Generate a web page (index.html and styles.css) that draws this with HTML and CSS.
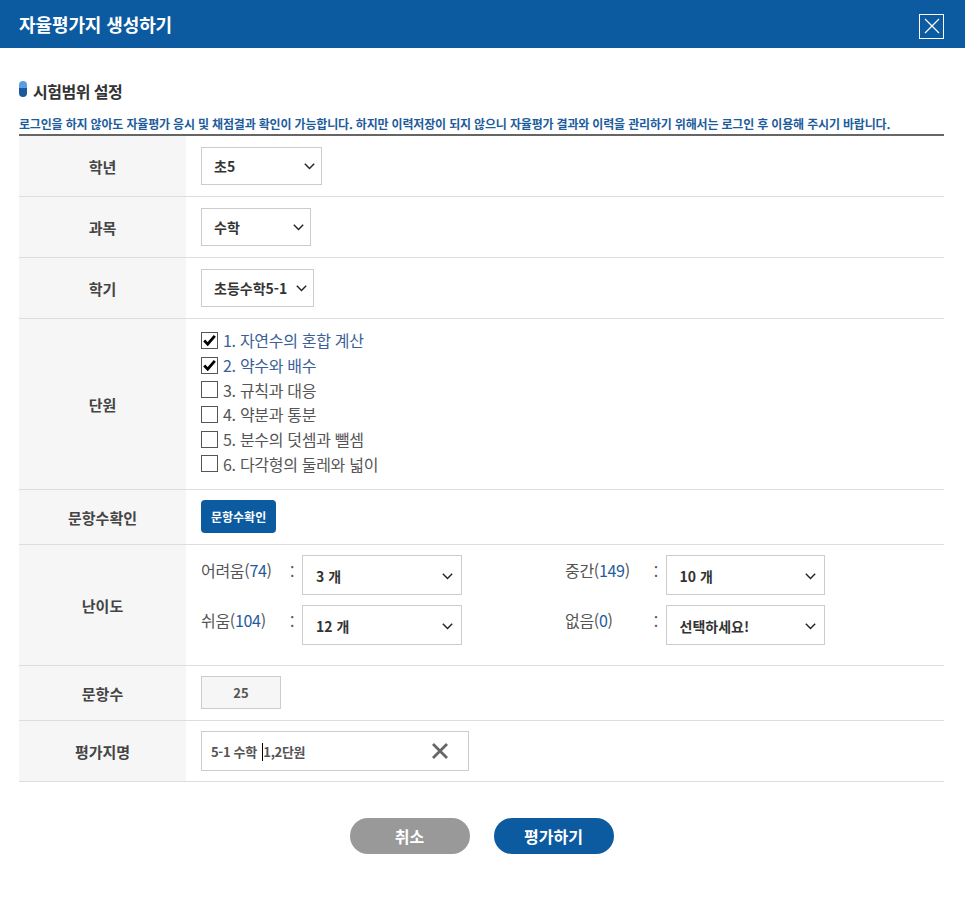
FILE: index.html
```html
<!DOCTYPE html>
<html lang="ko">
<head>
<meta charset="utf-8">
<title>자율평가지 생성하기</title>
<link rel="stylesheet" href="styles.css">
</head>
<body>
<div class="modal">
  <header class="modal-head">
    <h1 class="modal-title">자율평가지 생성하기</h1>
    <button class="close-btn" type="button" aria-label="닫기">
      <svg width="16" height="16" viewBox="0 0 16 16"><path d="M1 1L15 15M15 1L1 15" stroke="#fff" stroke-width="1.2" fill="none"/></svg>
    </button>
  </header>
  <main class="modal-body">
    <h2 class="section-title"><span class="pill"></span>시험범위 설정</h2>
    <p class="notice">로그인을 하지 않아도 자율평가 응시 및 채점결과 확인이 가능합니다. 하지만 이력저장이 되지 않으니 자율평가 결과와 이력을 관리하기 위해서는 로그인 후 이용해 주시기 바랍니다.</p>
    <table class="form-table">
      <tr>
        <th>학년</th>
        <td class="cell-std"><div class="select w120"><span>초5</span><svg class="chev" width="11" height="7" viewBox="0 0 11 7"><path d="M0.8 0.8L5.5 5.6L10.2 0.8" stroke="#222" stroke-width="1.4" fill="none"/></svg></div></td>
      </tr>
      <tr>
        <th>과목</th>
        <td class="cell-std"><div class="select w109"><span>수학</span><svg class="chev" width="11" height="7" viewBox="0 0 11 7"><path d="M0.8 0.8L5.5 5.6L10.2 0.8" stroke="#222" stroke-width="1.4" fill="none"/></svg></div></td>
      </tr>
      <tr>
        <th>학기</th>
        <td class="cell-std"><div class="select w112"><span>초등수학5-1</span><svg class="chev" width="11" height="7" viewBox="0 0 11 7"><path d="M0.8 0.8L5.5 5.6L10.2 0.8" stroke="#222" stroke-width="1.4" fill="none"/></svg></div></td>
      </tr>
      <tr>
        <th>단원</th>
        <td class="cell-units">
          <ul class="units">
            <li class="on"><span class="cb"><svg width="15" height="15" viewBox="0 0 15 15"><path d="M2.2 7.6L5.7 11.2L12.8 2.8" stroke="#000" stroke-width="2.8" fill="none"/></svg></span>1. 자연수의 혼합 계산</li>
            <li class="on"><span class="cb"><svg width="15" height="15" viewBox="0 0 15 15"><path d="M2.2 7.6L5.7 11.2L12.8 2.8" stroke="#000" stroke-width="2.8" fill="none"/></svg></span>2. 약수와 배수</li>
            <li><span class="cb"></span>3. 규칙과 대응</li>
            <li><span class="cb"></span>4. 약분과 통분</li>
            <li><span class="cb"></span>5. 분수의 덧셈과 뺄셈</li>
            <li><span class="cb"></span>6. 다각형의 둘레와 넓이</li>
          </ul>
        </td>
      </tr>
      <tr>
        <th>문항수확인</th>
        <td class="cell-btn"><button class="btn-check" type="button">문항수확인</button></td>
      </tr>
      <tr>
        <th>난이도</th>
        <td class="cell-level">
          <div class="levels">
            <div class="level"><span class="lv-label">어려움(<b>74</b>)</span><span class="colon">:</span><div class="select lv"><span>3 개</span><svg class="chev" width="11" height="7" viewBox="0 0 11 7"><path d="M0.8 0.8L5.5 5.6L10.2 0.8" stroke="#222" stroke-width="1.4" fill="none"/></svg></div></div>
            <div class="level"><span class="lv-label">중간(<b>149</b>)</span><span class="colon">:</span><div class="select lv"><span>10 개</span><svg class="chev" width="11" height="7" viewBox="0 0 11 7"><path d="M0.8 0.8L5.5 5.6L10.2 0.8" stroke="#222" stroke-width="1.4" fill="none"/></svg></div></div>
            <div class="level"><span class="lv-label">쉬움(<b>104</b>)</span><span class="colon">:</span><div class="select lv"><span>12 개</span><svg class="chev" width="11" height="7" viewBox="0 0 11 7"><path d="M0.8 0.8L5.5 5.6L10.2 0.8" stroke="#222" stroke-width="1.4" fill="none"/></svg></div></div>
            <div class="level"><span class="lv-label">없음(<b>0</b>)</span><span class="colon">:</span><div class="select lv"><span>선택하세요!</span><svg class="chev" width="11" height="7" viewBox="0 0 11 7"><path d="M0.8 0.8L5.5 5.6L10.2 0.8" stroke="#222" stroke-width="1.4" fill="none"/></svg></div></div>
          </div>
        </td>
      </tr>
      <tr>
        <th>문항수</th>
        <td class="cell-count"><div class="count-box">25</div></td>
      </tr>
      <tr>
        <th>평가지명</th>
        <td class="cell-std"><div class="name-input"><span class="name-text">5-1 수학 <i class="caret"></i>1,2단원</span><svg class="clear" width="18" height="18" viewBox="0 0 18 18"><path d="M2 2L16 16M16 2L2 16" stroke="#666" stroke-width="2.8" fill="none"/></svg></div></td>
      </tr>
    </table>
    <div class="actions">
      <button class="btn btn-cancel" type="button">취소</button>
      <button class="btn btn-ok" type="button">평가하기</button>
    </div>
  </main>
</div>
</body>
</html>
```

FILE: styles.css
```css
* { box-sizing: border-box; }
html, body { margin: 0; padding: 0; background: #fff; }
body {
  font-family: "Noto Sans CJK KR", "Noto Sans", sans-serif;
  color: #333;
  width: 965px;
}
.modal-head {
  height: 48px;
  background: #0c5aa0;
  display: flex;
  align-items: center;
  justify-content: space-between;
  padding: 0 21px 0 19px;
}
.modal-title {
  margin: 0;
  color: #fff;
  font-size: 18px;
  font-weight: 700;
  letter-spacing: -0.1px;
}
.close-btn {
  width: 25px;
  height: 25px;
  border: 1px solid #fff;
  background: transparent;
  padding: 0;
  display: flex;
  align-items: center;
  justify-content: center;
  margin-top: 4px;
}
.modal-body {
  padding: 33px 21px 0 19px;
}
.section-title {
  margin: 0;
  height: 20px;
  display: flex;
  align-items: center;
  gap: 6px;
  font-size: 16px;
  font-weight: 700;
  color: #333;
  letter-spacing: -0.5px;
}
.pill {
  width: 8px;
  height: 16px;
  border-radius: 4px;
  background: linear-gradient(#5a9ee0 0, #5a9ee0 45%, #1a5a9c 45%, #1a5a9c 100%);
  margin-top: -4px;
}
.notice {
  margin: 15px 0 0;
  font-size: 12px;
  font-weight: 700;
  line-height: 16px;
  color: #1d5c9c;
  letter-spacing: -0.17px;
  padding-bottom: 2px;
  border-bottom: 2px solid #666;
  white-space: nowrap;
}
.form-table {
  width: 100%;
  border-collapse: collapse;
}
.form-table tr { border-bottom: 1px solid #ddd; }
.form-table th {
  width: 167px;
  background: #f6f6f6;
  font-size: 15px;
  font-weight: 700;
  color: #444;
  text-align: center;
  padding: 0;
}
.form-table td {
  padding: 0 0 0 15px;
  vertical-align: top;
}
.cell-std { padding-top: 11px !important; padding-bottom: 11px !important; }
.cell-units { padding-top: 9px !important; padding-bottom: 13px !important; }
.cell-btn { padding-top: 10px !important; padding-bottom: 11px !important; }
.cell-level { padding-top: 10px !important; padding-bottom: 10px !important; }
.cell-count { padding-top: 10px !important; padding-bottom: 11px !important; }

.select {
  height: 38px;
  border: 1px solid #ccc;
  background: #fff;
  display: flex;
  align-items: center;
  justify-content: space-between;
  padding: 0 6px 0 12px;
  font-size: 14px;
  font-weight: 700;
  color: #333;
}
.w120 { width: 121px; }
.w109 { width: 110px; }
.w112 { width: 113px; }
.chev { flex: none; }

.units {
  list-style: none;
  margin: 0;
  padding: 0;
}
.units li {
  height: 24.7px;
  display: flex;
  align-items: center;
  font-size: 16px;
  color: #555;
  letter-spacing: -0.3px;
}
.units li.on { color: #3c5f99; }
.cb {
  width: 17px;
  height: 17px;
  border: 1px solid #555;
  background: #fff;
  margin-right: 5px;
  display: flex;
  align-items: center;
  justify-content: center;
  flex: none;
}

.btn-check {
  height: 33px;
  padding: 0 10px;
  border: 0;
  border-radius: 4px;
  background: #0c5aa0;
  color: #fff;
  font-family: inherit;
  font-size: 12px;
  font-weight: 700;
  display: block;
}

.levels {
  display: grid;
  grid-template-columns: 364px 260px;
  row-gap: 10px;
  padding-bottom: 10px;
}
.level {
  display: flex;
  align-items: flex-start;
}
.lv-label {
  width: 89px;
  font-size: 16px;
  color: #555;
  line-height: 24px;
  padding-top: 3px;
  letter-spacing: -0.3px;
}
.lv-label b { font-weight: 400; color: #1d5c9c; }
.colon {
  width: 12px;
  font-size: 16px;
  color: #555;
  line-height: 24px;
  padding-top: 4px;
}
.select.lv {
  width: 160px;
  height: 40px;
  padding: 2px 8px 0 13px;
}

.count-box {
  width: 80px;
  height: 33px;
  border: 1px solid #ccc;
  background: #f6f6f6;
  display: flex;
  align-items: center;
  justify-content: center;
  font-size: 13px;
  font-weight: 700;
  color: #555;
}

.name-input {
  width: 268px;
  height: 40px;
  margin-top: -1px;
  margin-bottom: -1px;
  border: 1px solid #ccc;
  display: flex;
  align-items: center;
  justify-content: space-between;
  padding: 0 19px 0 9px;
}
.name-text {
  font-size: 13px;
  font-weight: 700;
  color: #555;
  letter-spacing: -0.3px;
}
.caret {
  display: inline-block;
  width: 1px;
  height: 18px;
  background: #000;
  vertical-align: -4px;
  margin-left: 2px;
}

.actions {
  display: flex;
  justify-content: center;
  gap: 24px;
  margin-top: 36px;
}
.btn {
  width: 120px;
  height: 36px;
  border: 0;
  border-radius: 18px;
  color: #fff;
  font-family: inherit;
  font-size: 16px;
  font-weight: 700;
}
.btn-cancel { background: #999; }
.btn-ok { background: #0c5aa0; }
```
